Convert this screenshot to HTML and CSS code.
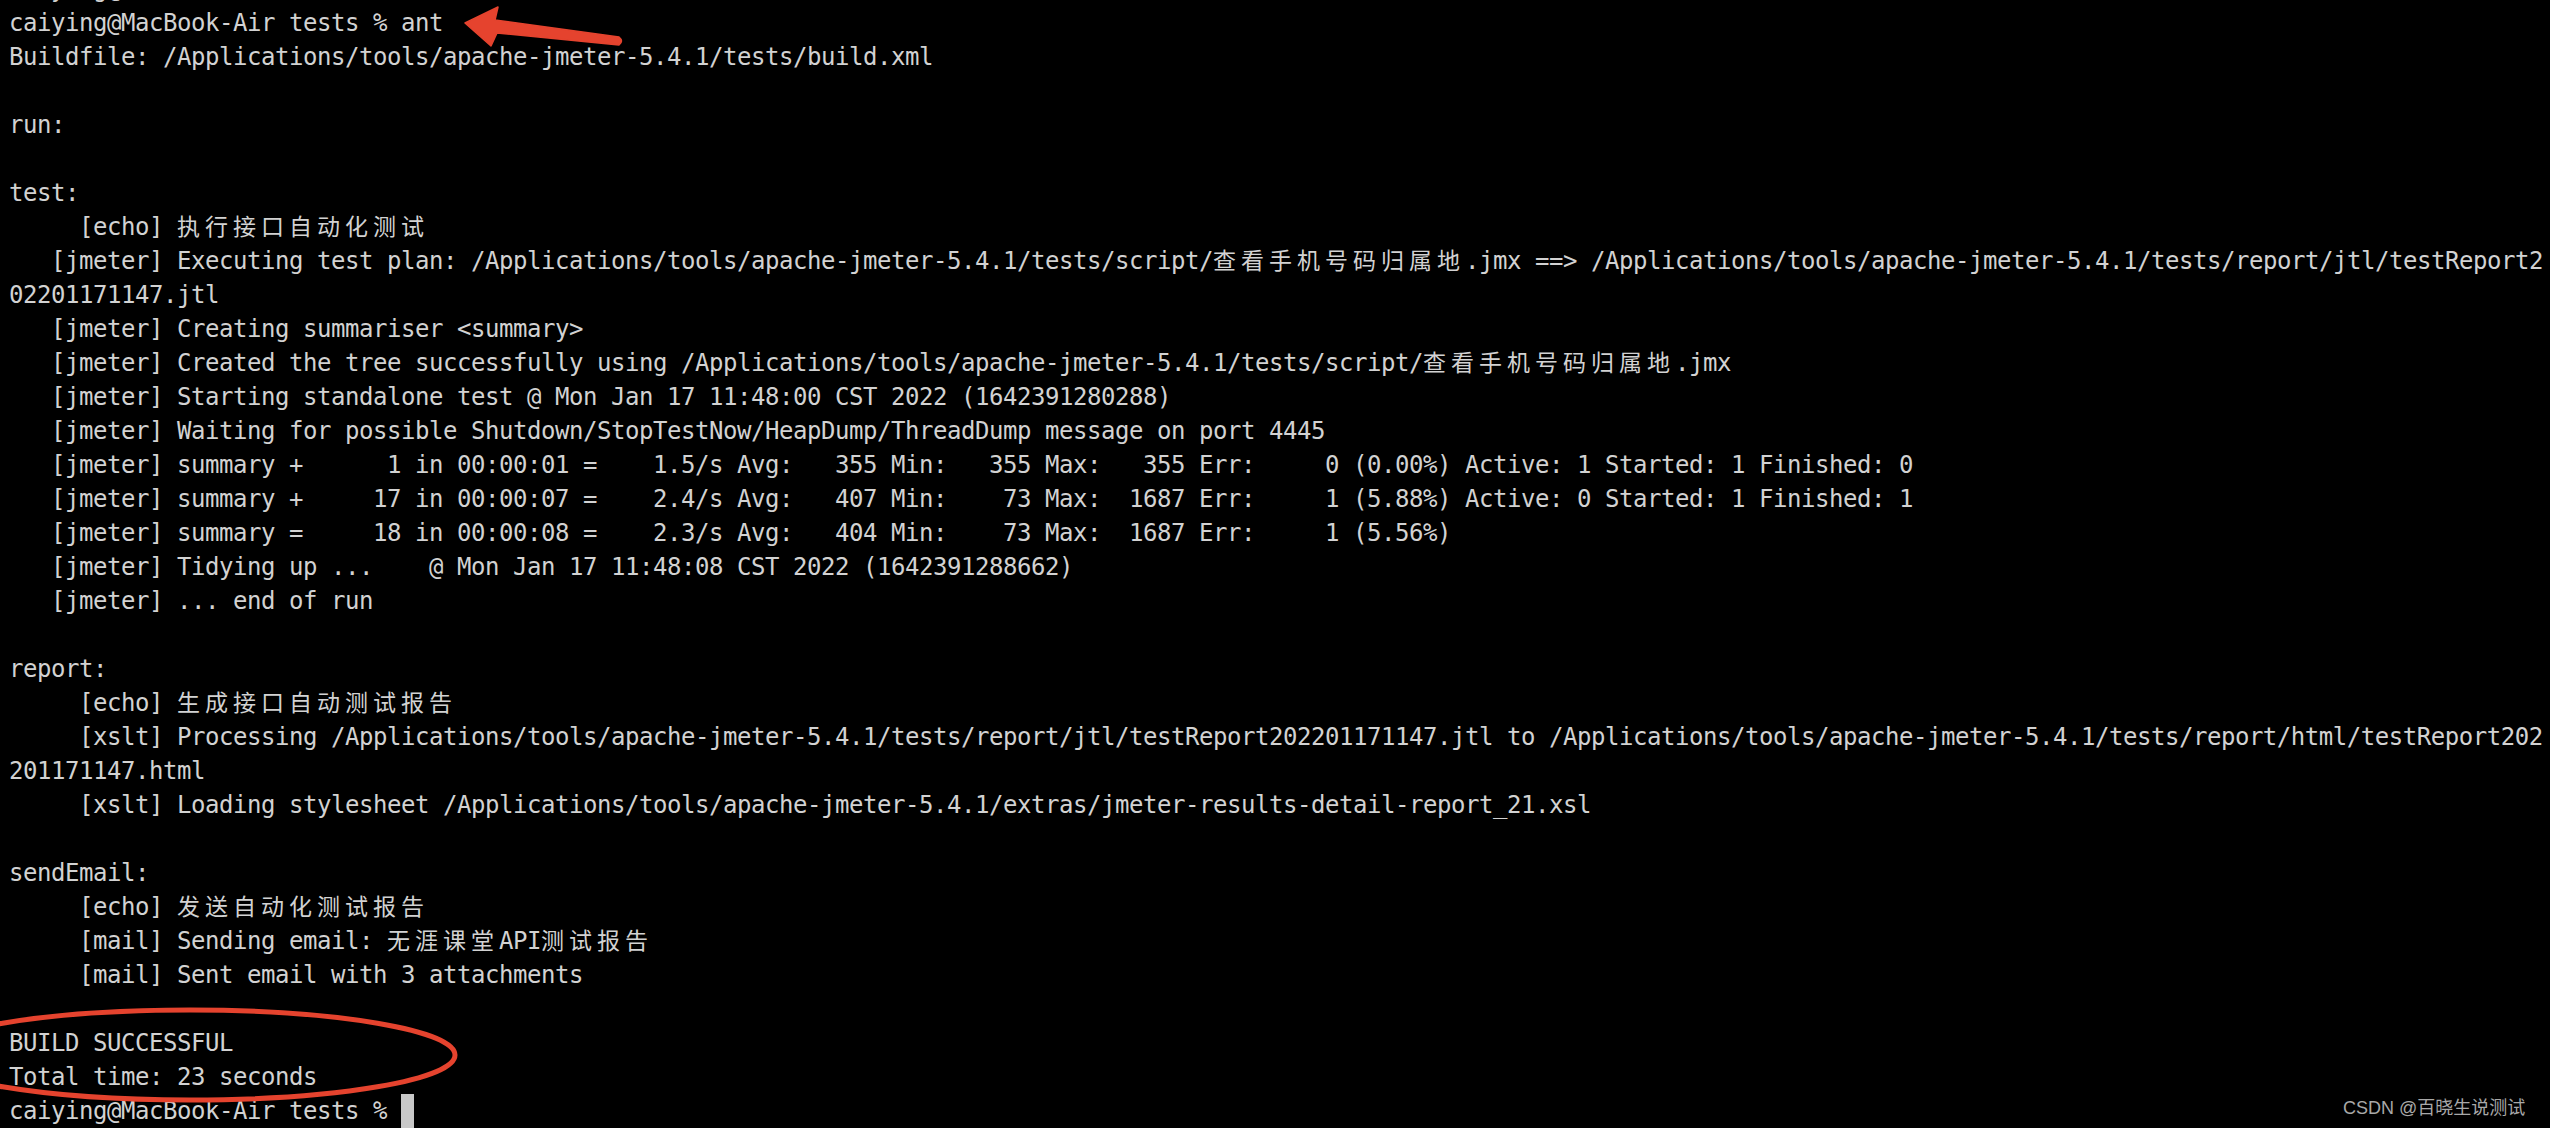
FILE: index.html
```html
<!DOCTYPE html>
<html lang="zh-CN">
<head>
<meta charset="utf-8">
<title>Terminal - ant</title>
<link rel="stylesheet" href="styles.css">
</head>
<body>
<div class="screen">
<pre class="term">caiying@MacBook-Air tests % cd tests
caiying@MacBook-Air tests % ant
Buildfile: /Applications/tools/apache-jmeter-5.4.1/tests/build.xml

run:

test:
     [echo] <span class="cjk">执行接口自动化测试</span>
   [jmeter] Executing test plan: /Applications/tools/apache-jmeter-5.4.1/tests/script/<span class="cjk">查看手机号码归属地</span>.jmx ==&gt; /Applications/tools/apache-jmeter-5.4.1/tests/report/jtl/testReport2
02201171147.jtl
   [jmeter] Creating summariser &lt;summary&gt;
   [jmeter] Created the tree successfully using /Applications/tools/apache-jmeter-5.4.1/tests/script/<span class="cjk">查看手机号码归属地</span>.jmx
   [jmeter] Starting standalone test @ Mon Jan 17 11:48:00 CST 2022 (1642391280288)
   [jmeter] Waiting for possible Shutdown/StopTestNow/HeapDump/ThreadDump message on port 4445
   [jmeter] summary +      1 in 00:00:01 =    1.5/s Avg:   355 Min:   355 Max:   355 Err:     0 (0.00%) Active: 1 Started: 1 Finished: 0
   [jmeter] summary +     17 in 00:00:07 =    2.4/s Avg:   407 Min:    73 Max:  1687 Err:     1 (5.88%) Active: 0 Started: 1 Finished: 1
   [jmeter] summary =     18 in 00:00:08 =    2.3/s Avg:   404 Min:    73 Max:  1687 Err:     1 (5.56%)
   [jmeter] Tidying up ...    @ Mon Jan 17 11:48:08 CST 2022 (1642391288662)
   [jmeter] ... end of run

report:
     [echo] <span class="cjk">生成接口自动测试报告</span>
     [xslt] Processing /Applications/tools/apache-jmeter-5.4.1/tests/report/jtl/testReport202201171147.jtl to /Applications/tools/apache-jmeter-5.4.1/tests/report/html/testReport202
201171147.html
     [xslt] Loading stylesheet /Applications/tools/apache-jmeter-5.4.1/extras/jmeter-results-detail-report_21.xsl

sendEmail:
     [echo] <span class="cjk">发送自动化测试报告</span>
     [mail] Sending email: <span class="cjk">无涯课堂</span>API<span class="cjk">测试报告</span>
     [mail] Sent email with 3 attachments

BUILD SUCCESSFUL
Total time: 23 seconds
caiying@MacBook-Air tests % <span class="cursor"></span></pre>

<svg class="arrow" width="180" height="60" viewBox="450 0 180 60" aria-hidden="true">
  <path d="M465 23 L498 7 L495 20 L619 37 Q624 41 619 45 L497 33 L491 46 Z" fill="#e5432e" stroke="#e5432e" stroke-width="1.5" stroke-linejoin="round"/>
</svg>

<svg class="ring" width="470" height="110" viewBox="0 1000 470 110" aria-hidden="true">
  <ellipse cx="190" cy="1055" rx="265" ry="45" fill="none" stroke="#e5432e" stroke-width="5"/>
</svg>

<div class="watermark">CSDN @百晓生说测试</div>
</div>
</body>
</html>
```

FILE: styles.css
```css
html, body {
  margin: 0;
  padding: 0;
  background: #000;
}

.screen {
  position: relative;
  width: 2550px;
  height: 1128px;
  overflow: hidden;
  background: #000;
}

.term {
  margin: -28px 0 0 0;
  padding: 0 0 0 9px;
  font-family: "DejaVu Sans Mono", "Noto Sans CJK SC", monospace;
  font-size: 24px;
  letter-spacing: -0.45px;
  line-height: 34px;
  color: #d2d2d2;
  white-space: pre;
}

.cjk {
  font-family: "Noto Sans CJK SC", sans-serif;
  font-size: 23px;
  letter-spacing: 5px;
  line-height: 0;
}

.cursor {
  display: inline-block;
  width: 13px;
  height: 34px;
  vertical-align: top;
  background: #c8c8c8;
}

.arrow {
  position: absolute;
  left: 450px;
  top: 0;
}

.ring {
  position: absolute;
  left: 0;
  top: 1000px;
}

.watermark {
  position: absolute;
  left: 2343px;
  top: 1096px;
  font-family: "Liberation Sans", "Noto Sans CJK SC", sans-serif;
  font-size: 18px;
  line-height: 24px;
  color: #a8a8a8;
  white-space: nowrap;
}
```
